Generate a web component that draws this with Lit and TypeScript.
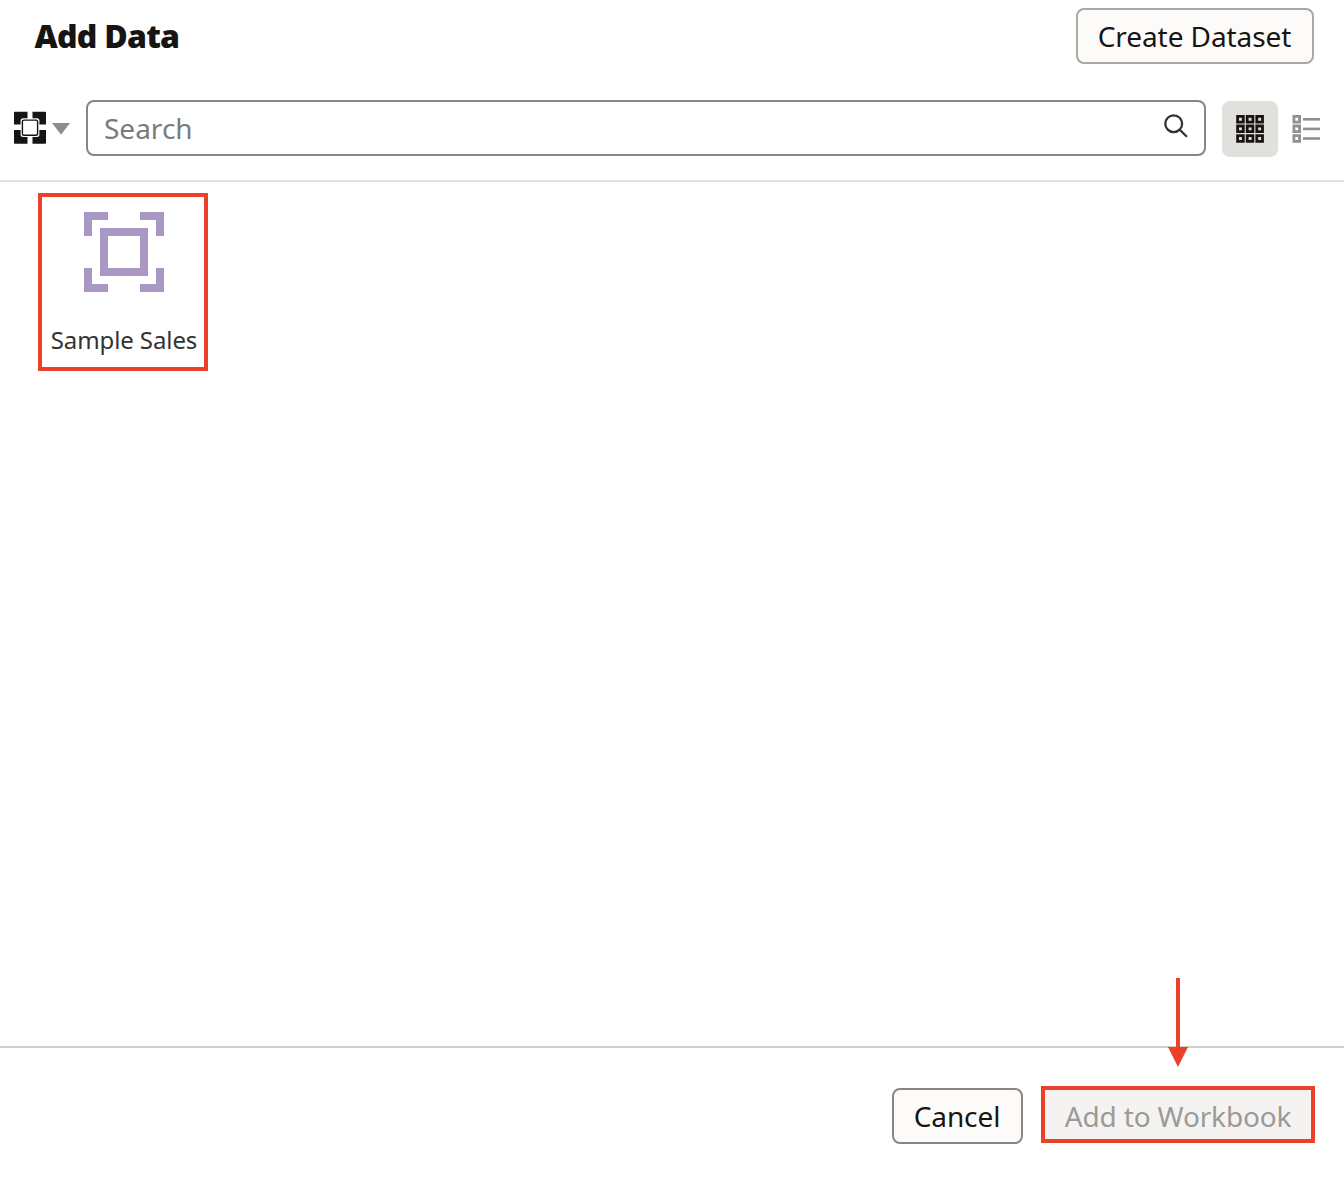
import { LitElement, html, svg, css } from "lit";
import { customElement, state } from "lit/decorators.js";

const CELLS = [0, 9.6, 19.2];

const cell = (x: number, y: number) =>
  svg`<path fill-rule="evenodd" d="M${x} ${y}h8.5v8.5h-8.5z M${x + 2.8} ${y + 2.8}v2.9h2.9v-2.9z"/>`;

@customElement("app-root")
export class AppRoot extends LitElement {
  @state() private items = ["Sample Sales"];

  static styles = css`
    :host {
      display: block;
      font-family: "Noto Sans", "Open Sans", sans-serif;
      color: #161513;
    }
    * { box-sizing: border-box; }
    svg { display: block; flex: none; }
    .dialog {
      position: relative;
      display: flex;
      flex-direction: column;
      width: 1344px;
      height: 1178px;
      background: #fff;
      overflow: hidden;
    }
    .header {
      display: flex;
      justify-content: space-between;
      height: 64px;
      padding: 8px 30px 0 34.5px;
    }
    h1 {
      margin: 0;
      font-size: 32px;
      line-height: 56px;
      font-weight: 900;
      letter-spacing: -0.75px;
      white-space: nowrap;
    }
    button {
      font: inherit;
      font-size: 28px;
      line-height: 52px;
      letter-spacing: -0.08px;
      color: inherit;
      padding: 0 1px 0 0;
      text-align: center;
      white-space: nowrap;
      height: 56px;
      border: 2px solid #8b8580;
      border-radius: 8px;
      background: #fcfbfa;
    }
    .create { width: 238px; border-color: #aca8a3; }
    .toolbar {
      display: flex;
      align-items: center;
      height: 118px;
      padding: 12px 10px 0 14px;
      border-bottom: 2px solid #e1e0dc;
    }
    .filter { display: flex; align-items: center; width: 72px; }
    .search {
      display: flex;
      align-items: center;
      justify-content: space-between;
      width: 1120px;
      height: 56px;
      padding: 0 16px;
      border: 2px solid #8b8580;
      border-radius: 8px;
      font-size: 28px;
      line-height: 52px;
      color: #7b7b7b;
    }
    .toggle {
      display: flex;
      align-items: center;
      justify-content: center;
      width: 56px;
      height: 56px;
      margin-top: 2px;
      border-radius: 8px;
    }
    .toggle.on { margin-left: 16px; background: #e2e0dc; }
    .content { flex: 1; padding: 11px 38px; }
    .tile {
      display: flex;
      flex-direction: column;
      align-items: center;
      width: 170px;
      height: 178px;
      padding: 15px 0 0 2px;
      border: 4px solid #ea4128;
    }
    .label {
      margin-top: 32px;
      font-size: 24px;
      line-height: 32px;
      letter-spacing: -0.1px;
      color: #333;
      white-space: nowrap;
    }
    .footer {
      display: flex;
      gap: 18px;
      justify-content: flex-end;
      height: 132px;
      padding: 38px 29px 0 0;
      border-top: 2px solid #d1cec9;
    }
    .cancel { width: 131px; margin-top: 2px; }
    .add {
      width: 274px;
      height: 57px;
      padding: 0;
      line-height: 53px;
      letter-spacing: -0.15px;
      border: 4px solid #ea4128;
      border-radius: 0;
      background: #f4f3f1;
      color: #9b9a98;
    }
    .arrow { position: absolute; left: 1168px; top: 978px; }
  `;

  render() {
    return html`
      <div class="dialog">
        <div class="header">
          <h1>Add Data</h1>
          <button class="create">Create Dataset</button>
        </div>
        <div class="toolbar">
          <div class="filter">
            <svg width="56" height="34" viewBox="0 0 56 34">
              <path fill="#161513" d="M1 .7h12.500v12.800H0V1.700a1 1 0 0 1 1-1zM18.500 .7H31a1 1 0 0 1 1 1v11.800H18.500zM0 19h13.500v13.700H1a1 1 0 0 1-1-1zM18.500 19H32v12.700a1 1 0 0 1-1 1H18.500z"/>
              <rect x="6.600" y="7.300" width="18.800" height="18.800" rx="2.500" fill="#fff"/>
              <rect x="8.400" y="9.100" width="15.200" height="15.200" rx="1.500" fill="#fff" stroke="#161513" stroke-width="1.400"/>
              <path fill="#8c8d8f" d="M38 12h18L47 23.700z"/>
            </svg>
          </div>
          <div class="search">
            <span>Search</span>
            <svg width="24" height="28" viewBox="0 0 24 28" fill="none" stroke="#33312e" stroke-width="2.300">
              <circle cx="9.700" cy="9.700" r="8.400"/>
              <path d="M15.500 15.500 22.900 22.700"/>
            </svg>
          </div>
          <div class="toggle on">
            <svg width="28" height="28" viewBox="0 0 28 28" fill="#161513">
              ${CELLS.map((y) => CELLS.map((x) => cell(x + 0.2, y)))}
            </svg>
          </div>
          <div class="toggle">
            <svg width="28" height="28" viewBox="0 0 28 28" fill="#8f9092">
              ${CELLS.map((y) => svg`${cell(0.5, y)}<rect x="11" y=${y + 3} width="17" height="2.600"/>`)}
            </svg>
          </div>
        </div>
        <div class="content">
          ${this.items.map(
            (name) => html`
              <div class="tile">
                <svg width="80" height="80" viewBox="0 0 80 80" fill="#a997c4">
                  <path d="M0 0h24v8H8v16H0zM56 0h24v24h-8V8H56zM0 56h8v16h16v8H0zM72 56h8v24H56v-8h16z"/>
                  <path fill-rule="evenodd" d="M16 16h48v48H16zM24 24v32h32V24z"/>
                </svg>
                <div class="label">${name}</div>
              </div>
            `
          )}
        </div>
        <div class="footer">
          <button class="cancel">Cancel</button>
          <button class="add">Add to Workbook</button>
        </div>
        <svg class="arrow" width="20" height="89" viewBox="0 0 20 89" fill="#ea4128">
          <path d="M8 0h4v69h8L10 89 0 69h8z"/>
        </svg>
      </div>
    `;
  }
}
